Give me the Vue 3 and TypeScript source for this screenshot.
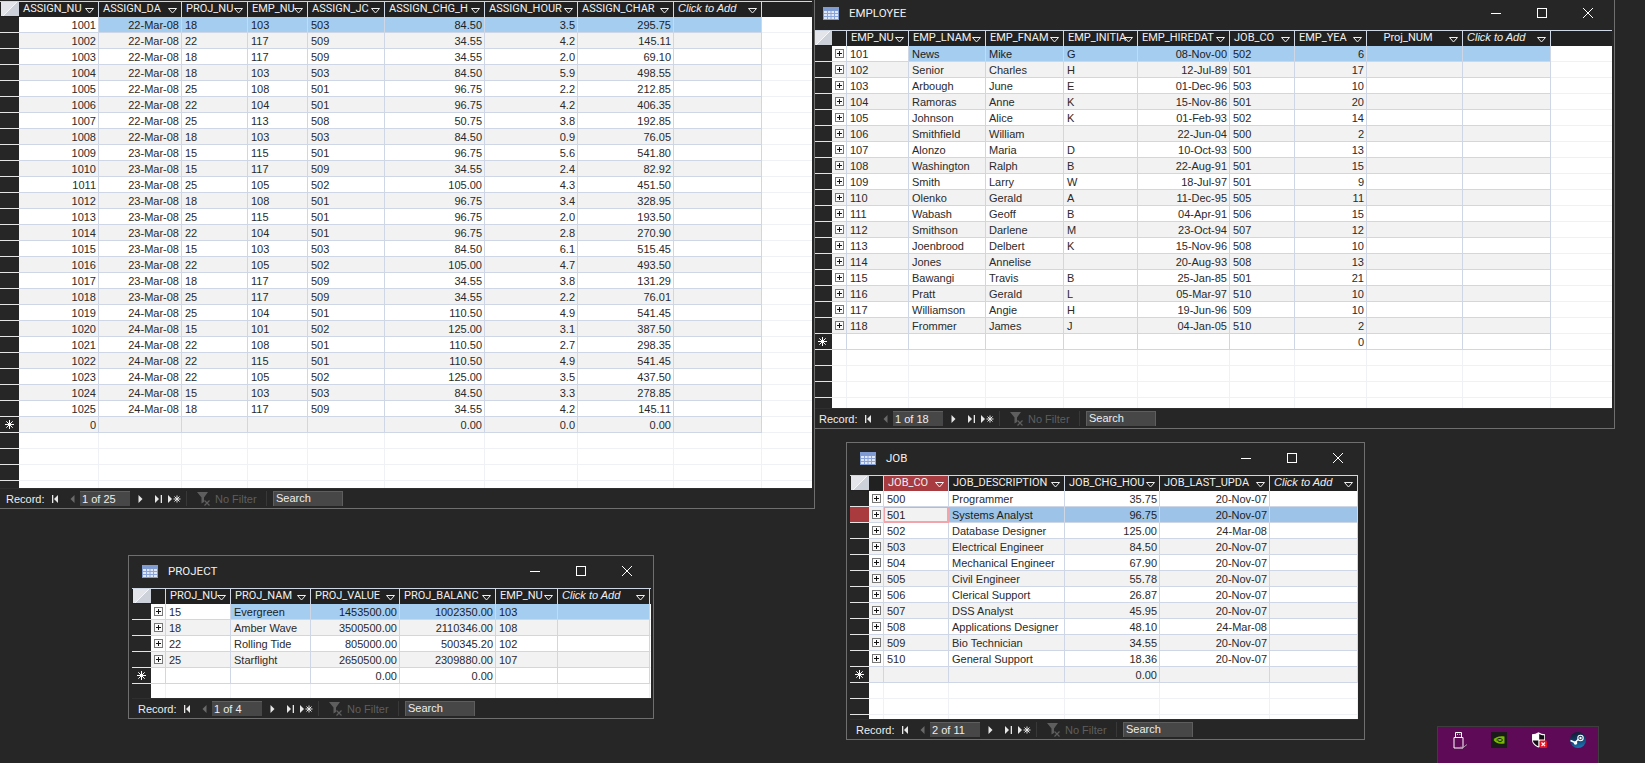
<script setup lang="ts">
interface Column {
    name: string,
    width: number,
    right?: boolean,
    centered?: boolean,
    italic?: boolean
}

interface SheetWindow {
    key: string,
    title: string,
    left: number,
    top: number,
    width: number,
    height: number,
    expand: boolean,
    columns: Column[],
    rows: string[],
    newRow: string,
    selected: number,
    active: boolean,
    record: string
}

const addCol = (width: number): Column => ({name: 'Click to Add', width, italic: true});

const windows: SheetWindow[] = [
    {
        key: 'employee',
        title: 'EMPLOYEE',
        left: 809,
        top: -3,
        width: 806,
        height: 432,
        expand: true,
        columns: [
            {name: 'EMP_NU', width: 62},
            {name: 'EMP_LNAM', width: 77},
            {name: 'EMP_FNAM', width: 78},
            {name: 'EMP_INITIA', width: 74},
            {name: 'EMP_HIREDAT', width: 92, right: true},
            {name: 'JOB_CO', width: 65},
            {name: 'EMP_YEA', width: 72, right: true},
            {name: 'Proj_NUM', width: 96, centered: true},
            addCol(88)
        ],
        rows: [
            '101|News|Mike|G|08-Nov-00|502|6',
            '102|Senior|Charles|H|12-Jul-89|501|17',
            '103|Arbough|June|E|01-Dec-96|503|10',
            '104|Ramoras|Anne|K|15-Nov-86|501|20',
            '105|Johnson|Alice|K|01-Feb-93|502|14',
            '106|Smithfield|William||22-Jun-04|500|2',
            '107|Alonzo|Maria|D|10-Oct-93|500|13',
            '108|Washington|Ralph|B|22-Aug-91|501|15',
            '109|Smith|Larry|W|18-Jul-97|501|9',
            '110|Olenko|Gerald|A|11-Dec-95|505|11',
            '111|Wabash|Geoff|B|04-Apr-91|506|15',
            '112|Smithson|Darlene|M|23-Oct-94|507|12',
            '113|Joenbrood|Delbert|K|15-Nov-96|508|10',
            '114|Jones|Annelise||20-Aug-93|508|13',
            '115|Bawangi|Travis|B|25-Jan-85|501|21',
            '116|Pratt|Gerald|L|05-Mar-97|510|10',
            '117|Williamson|Angie|H|19-Jun-96|509|10',
            '118|Frommer|James|J|04-Jan-05|510|2'
        ],
        newRow: '||||||0',
        selected: 0,
        active: false,
        record: '1 of 18'
    },
    {
        key: 'assignment',
        title: '',
        left: -4,
        top: -32,
        width: 819,
        height: 541,
        expand: false,
        columns: [
            {name: 'ASSIGN_NU', width: 80, right: true},
            {name: 'ASSIGN_DA', width: 83, right: true},
            {name: 'PROJ_NU', width: 66},
            {name: 'EMP_NU', width: 60},
            {name: 'ASSIGN_JC', width: 77},
            {name: 'ASSIGN_CHG_H', width: 100, right: true},
            {name: 'ASSIGN_HOUR', width: 93, right: true},
            {name: 'ASSIGN_CHAR', width: 96, right: true},
            addCol(88)
        ],
        rows: [
            '1001|22-Mar-08|18|103|503|84.50|3.5|295.75',
            '1002|22-Mar-08|22|117|509|34.55|4.2|145.11',
            '1003|22-Mar-08|18|117|509|34.55|2.0|69.10',
            '1004|22-Mar-08|18|103|503|84.50|5.9|498.55',
            '1005|22-Mar-08|25|108|501|96.75|2.2|212.85',
            '1006|22-Mar-08|22|104|501|96.75|4.2|406.35',
            '1007|22-Mar-08|25|113|508|50.75|3.8|192.85',
            '1008|22-Mar-08|18|103|503|84.50|0.9|76.05',
            '1009|23-Mar-08|15|115|501|96.75|5.6|541.80',
            '1010|23-Mar-08|15|117|509|34.55|2.4|82.92',
            '1011|23-Mar-08|25|105|502|105.00|4.3|451.50',
            '1012|23-Mar-08|18|108|501|96.75|3.4|328.95',
            '1013|23-Mar-08|25|115|501|96.75|2.0|193.50',
            '1014|23-Mar-08|22|104|501|96.75|2.8|270.90',
            '1015|23-Mar-08|15|103|503|84.50|6.1|515.45',
            '1016|23-Mar-08|22|105|502|105.00|4.7|493.50',
            '1017|23-Mar-08|18|117|509|34.55|3.8|131.29',
            '1018|23-Mar-08|25|117|509|34.55|2.2|76.01',
            '1019|24-Mar-08|25|104|501|110.50|4.9|541.45',
            '1020|24-Mar-08|15|101|502|125.00|3.1|387.50',
            '1021|24-Mar-08|22|108|501|110.50|2.7|298.35',
            '1022|24-Mar-08|22|115|501|110.50|4.9|541.45',
            '1023|24-Mar-08|22|105|502|125.00|3.5|437.50',
            '1024|24-Mar-08|15|103|503|84.50|3.3|278.85',
            '1025|24-Mar-08|18|117|509|34.55|4.2|145.11'
        ],
        newRow: '0|||||0.00|0.0|0.00',
        selected: 0,
        active: false,
        record: '1 of 25'
    },
    {
        key: 'project',
        title: 'PROJECT',
        left: 128,
        top: 555,
        width: 526,
        height: 164,
        expand: true,
        columns: [
            {name: 'PROJ_NU', width: 65},
            {name: 'PROJ_NAM', width: 80},
            {name: 'PROJ_VALUE', width: 89, right: true},
            {name: 'PROJ_BALANC', width: 96, right: true},
            {name: 'EMP_NU', width: 62},
            addCol(92)
        ],
        rows: [
            '15|Evergreen|1453500.00|1002350.00|103',
            '18|Amber Wave|3500500.00|2110346.00|108',
            '22|Rolling Tide|805000.00|500345.20|102',
            '25|Starflight|2650500.00|2309880.00|107'
        ],
        newRow: '||0.00|0.00|',
        selected: 0,
        active: false,
        record: '1 of 4'
    },
    {
        key: 'job',
        title: 'JOB',
        left: 846,
        top: 442,
        width: 519,
        height: 298,
        expand: true,
        columns: [
            {name: 'JOB_CO', width: 65},
            {name: 'JOB_DESCRIPTION', width: 116},
            {name: 'JOB_CHG_HOU', width: 95, right: true},
            {name: 'JOB_LAST_UPDA', width: 110, right: true},
            addCol(88)
        ],
        rows: [
            '500|Programmer|35.75|20-Nov-07',
            '501|Systems Analyst|96.75|20-Nov-07',
            '502|Database Designer|125.00|24-Mar-08',
            '503|Electrical Engineer|84.50|20-Nov-07',
            '504|Mechanical Engineer|67.90|20-Nov-07',
            '505|Civil Engineer|55.78|20-Nov-07',
            '506|Clerical Support|26.87|20-Nov-07',
            '507|DSS Analyst|45.95|20-Nov-07',
            '508|Applications Designer|48.10|24-Mar-08',
            '509|Bio Technician|34.55|20-Nov-07',
            '510|General Support|18.36|20-Nov-07'
        ],
        newRow: '||0.00|',
        selected: 1,
        active: true,
        record: '2 of 11'
    }
];

const emptyRows = [0, 1, 2, 3, 4, 5];

function winStyle(win: SheetWindow) {
    return {
        left: `${win.left}px`,
        top: `${win.top}px`,
        width: `${win.width}px`,
        height: `${win.height}px`
    };
}

function gridStyle(win: SheetWindow) {
    const widths = win.columns.map(c => `${c.width}px`).join(' ');
    return {gridTemplateColumns: `19px ${win.expand ? '15px ' : ''}${widths} 1fr`};
}

function cells(win: SheetWindow, line: string) {
    const parts = line.split('|');
    return win.columns.map((_, i) => parts[i] ?? '');
}
</script>

<template>
    <div class="desktop">
        <section
            v-for="win in windows"
            :key="win.key"
            class="win"
            :class="`win--${win.key}`"
            :style="winStyle(win)"
        >
            <header class="titlebar">
                <template v-if="win.title">
                    <svg class="table-icon" width="16" height="13" viewBox="0 0 16 13">
                        <rect width="16" height="13" fill="#7f9bd2"/>
                        <rect x="1" y="4" width="14" height="8" fill="#dfe7f8"/>
                        <path d="M1 6.500h14M1 9.500h14" stroke="#8aa3d8"/>
                        <path d="M4.500 4v8M8 4v8M11.500 4v8" stroke="#8aa3d8"/>
                    </svg>
                    <span class="title">{{ win.title }}</span>
                    <div class="controls">
                        <svg class="control" width="46" height="12" viewBox="0 0 46 12">
                            <path d="M18 6.500h10" stroke="#ffffff"/>
                        </svg>
                        <svg class="control" width="46" height="12" viewBox="0 0 46 12">
                            <rect x="18.500" y="1.500" width="9" height="9" fill="none" stroke="#ffffff"/>
                        </svg>
                        <svg class="control" width="46" height="12" viewBox="0 0 46 12">
                            <path d="M18 1l10 10M28 1l-10 10" stroke="#ffffff"/>
                        </svg>
                    </div>
                </template>
            </header>

            <div class="sheet">
                <div class="row row--head" :style="gridStyle(win)">
                    <div class="corner"></div>
                    <div v-if="win.expand" class="hcell"></div>
                    <div
                        v-for="(col, i) in win.columns"
                        :key="col.name"
                        class="hcell"
                        :class="{'hcell--active': win.active && i === 0}"
                    >
                        <span
                            class="hlabel"
                            :class="{'hlabel--italic': col.italic, 'hlabel--centered': col.centered}"
                        >{{ col.name }}</span>
                        <svg class="harrow" width="9" height="6" viewBox="0 0 9 6">
                            <path d="M0.500 0.500h8L4.500 5z" fill="none" stroke="#f0f0f0"/>
                        </svg>
                    </div>
                    <div></div>
                </div>

                <div
                    v-for="(line, r) in win.rows"
                    :key="line"
                    class="row"
                    :class="{'row--alt': r % 2 === 1}"
                    :style="gridStyle(win)"
                >
                    <div class="selector" :class="{'selector--active': win.active && r === win.selected}"></div>
                    <div v-if="win.expand" class="cell cell--expand">
                        <svg width="9" height="9" viewBox="0 0 9 9">
                            <rect x="0.500" y="0.500" width="8" height="8" fill="#fbfbfb" stroke="#777777"/>
                            <path d="M2 4.500h5M4.500 2v5" stroke="#111111"/>
                        </svg>
                    </div>
                    <div
                        v-for="(value, c) in cells(win, line)"
                        :key="c"
                        class="cell"
                        :class="{
                            'cell--right': win.columns[c].right,
                            'cell--selected': r === win.selected && c > 0,
                            'cell--focus': win.active && r === win.selected && c === 0
                        }"
                    >{{ value }}</div>
                    <div class="filler"></div>
                </div>

                <div class="row" :class="{'row--alt': win.rows.length % 2 === 1}" :style="gridStyle(win)">
                    <div class="selector">
                        <svg width="9" height="9" viewBox="0 0 9 9">
                            <path d="M4.500 0v9M0 4.500h9M1.300 1.300l6.400 6.400M7.700 1.300l-6.400 6.400" stroke="#ffffff"/>
                        </svg>
                    </div>
                    <div v-if="win.expand" class="cell"></div>
                    <div
                        v-for="(value, c) in cells(win, win.newRow)"
                        :key="c"
                        class="cell"
                        :class="{'cell--right': win.columns[c].right}"
                    >{{ value }}</div>
                    <div class="filler"></div>
                </div>

                <div v-for="n in emptyRows" :key="n" class="row row--empty" :style="gridStyle(win)">
                    <div class="selector"></div>
                    <div v-if="win.expand" class="cell"></div>
                    <div v-for="col in win.columns" :key="col.name" class="cell"></div>
                    <div class="filler"></div>
                </div>
            </div>

            <footer class="nav">
                <span class="nav-label">Record:</span>
                <svg class="nav-first" width="6" height="8" viewBox="0 0 6 8">
                    <path d="M0 0h1.300v8H0zM6 0v8L2 4z" fill="#e8e8e8"/>
                </svg>
                <svg class="nav-prev" width="5" height="8" viewBox="0 0 5 8">
                    <path d="M4.500 0v8L0.500 4z" fill="#6a6a6a"/>
                </svg>
                <span class="nav-box">{{ win.record }}</span>
                <svg class="nav-next" width="5" height="8" viewBox="0 0 5 8">
                    <path d="M0.500 0v8l4-4z" fill="#e8e8e8"/>
                </svg>
                <svg class="nav-last" width="7" height="8" viewBox="0 0 7 8">
                    <path d="M0 0v8l4-4zM5.700 0H7v8H5.700z" fill="#e8e8e8"/>
                </svg>
                <svg class="nav-new" width="13" height="8" viewBox="0 0 13 8">
                    <path d="M0 0v8l4-4z" fill="#e8e8e8"/>
                    <path d="M9 0.500v7M5.500 4h7M6.500 1.500l5 5M11.500 1.500l-5 5" stroke="#e8e8e8"/>
                </svg>
                <span class="nav-sep nav-sep--first"></span>
                <svg class="nav-filter" width="14" height="14" viewBox="0 0 14 14">
                    <path d="M0 0h11L7 5.500V10L4.500 11.500V5.500z" fill="#5e5e5e"/>
                    <path d="M7.500 8.500l5 5M12.500 8.500l-5 5" stroke="#5e5e5e" stroke-width="1.200"/>
                </svg>
                <span class="nav-nofilter">No Filter</span>
                <span class="nav-sep nav-sep--second"></span>
                <span class="nav-search">Search</span>
            </footer>
        </section>

        <div class="tray">
            <div class="tray-slot">
                <svg width="16" height="17" viewBox="0 0 16 17">
                    <path d="M3.500 0.500h6v5h-6zM2 5.500h9v10.500H2z" fill="none" stroke="#ffffff"/>
                    <path d="M5 2.300h1M7.300 2.300h1" stroke="#ffffff"/>
                    <path d="M9 14.500l1.500 1.500 4.500-3.500" fill="none" stroke="#a99aa7"/>
                </svg>
            </div>
            <div class="tray-slot">
                <svg width="16" height="16" viewBox="0 0 16 16">
                    <rect width="16" height="16" fill="#1b1b1b"/>
                    <path d="M2.500 8C4.500 5 8 3.800 13.500 4.500v7C8 12.500 4.500 11 2.500 8z" fill="#76b900"/>
                    <path d="M5.500 8C7 6.500 9 6 10.500 6.800c1.200.7 1 2.300-.5 2.700C8.500 10 7 9.200 6.500 8" fill="none" stroke="#1b1b1b"/>
                </svg>
            </div>
            <div class="tray-slot">
                <svg width="16" height="16" viewBox="0 0 16 16">
                    <path d="M7.500 0.300C9.500 1.600 11.500 2.200 14 2.200V8c0 3.500-3 6.200-6.500 7.500C4 14.200 1 11.500 1 8V2.200c2.500 0 4.500-.6 6.500-1.900z" fill="#ffffff"/>
                    <path d="M8.200 2c1.500.8 3 1.200 5 1.300v4.200h-5zM1.800 8.500h5.500v5.800C4.500 13 2.200 11 1.800 8.500z" fill="#140f14"/>
                    <rect x="8.500" y="8.500" width="7.500" height="7.500" rx="1" fill="#e81123"/>
                    <path d="M10.500 10.500l3.500 3.500M14 10.500l-3.500 3.500" stroke="#ffffff" stroke-width="1.200"/>
                </svg>
            </div>
            <div class="tray-slot">
                <svg width="16" height="16" viewBox="0 0 16 16">
                    <defs>
                        <linearGradient id="steam-fill" x1="0.300" y1="0" x2="0.600" y2="1">
                            <stop offset="0" stop-color="#101c30"/>
                            <stop offset="0.500" stop-color="#123a6a"/>
                            <stop offset="1" stop-color="#1a7ab8"/>
                        </linearGradient>
                    </defs>
                    <circle cx="8" cy="8" r="8" fill="url(#steam-fill)"/>
                    <circle cx="10.500" cy="6" r="2.700" fill="none" stroke="#ffffff" stroke-width="1.100"/>
                    <circle cx="10.500" cy="6" r="1.200" fill="#ffffff"/>
                    <path d="M8 7.500L5.500 10.200M0.500 8.500L5 10.500" stroke="#ffffff" stroke-width="1.400"/>
                    <circle cx="5.500" cy="11" r="1.800" fill="#ffffff"/>
                </svg>
            </div>
        </div>
    </div>
</template>

<style scoped>
.desktop {
    position: relative;
    width: 1645px;
    height: 763px;
    overflow: hidden;
    background: #262626;
    font-family: "Liberation Sans", Arial, sans-serif;
    font-size: 11px;
    color: #2a2a2a;
}

.win {
    position: absolute;
    box-sizing: border-box;
    display: flex;
    flex-direction: column;
    background: #262626;
    border: 1px solid #6f6f6f;
    padding: 0 2px 0 3px;
}

.win--job {
    padding-right: 6px;
}

.titlebar {
    flex: none;
    height: 30px;
    margin-bottom: 2px;
    display: flex;
    align-items: center;
    color: #f0f0f0;
}

.table-icon {
    margin-left: 10px;
}

.title {
    margin-left: 10px;
    font-family: Roboto, "Liberation Sans", sans-serif;
    font-size: 11.5px;
}

.controls {
    margin-left: auto;
    margin-right: 1px;
    display: flex;
}

.win--job .controls {
    margin-right: -3px;
}

.control {
    display: block;
}

.sheet {
    flex: 1;
    min-height: 0;
    overflow: hidden;
    background: #ffffff;
}

.row {
    display: grid;
    height: 16px;
    box-sizing: border-box;
    background: #ffffff;
}

.row--alt .cell {
    background: #f2f2f2;
}

.row--head {
    background: #212121;
    border-top: 1px solid #cfd6e4;
}

.corner {
    margin: 0 0 1px 1px;
    background: linear-gradient(135deg, #e3e5ea 49%, #f6f7f9 50%, #f6f7f9 52%, #cdd1da 53%);
}

.hcell {
    min-width: 0;
    display: flex;
    align-items: center;
    gap: 4px;
    padding: 0 4px;
    border-right: 1px solid #cfd6e4;
    color: #f0f0f0;
    font-family: Roboto, "Liberation Sans", sans-serif;
    font-size: 11px;
    line-height: 13px;
}

.hcell--active {
    background: #a83b40;
}

.hlabel {
    flex: 1;
    min-width: 0;
    margin-bottom: 2px;
    white-space: nowrap;
}

.hlabel--italic {
    font-family: "Liberation Sans", Arial, sans-serif;
    font-style: italic;
}

.hlabel--centered {
    text-align: center;
}

.harrow {
    flex: none;
    margin-top: 3px;
}

.selector {
    background: #262626;
    border-bottom: 1px solid #e4e4e4;
    display: flex;
    align-items: center;
    justify-content: center;
}

.selector--active {
    background: #a93b3e;
}

.cell {
    min-width: 0;
    overflow: hidden;
    box-sizing: border-box;
    padding: 1px 2px 0 3px;
    border-right: 1px solid #cfd6e6;
    border-bottom: 1px solid #cfd6e6;
    line-height: 14px;
    white-space: nowrap;
}

.cell--right {
    text-align: right;
}

.cell--expand {
    padding: 0;
    display: flex;
    align-items: center;
    justify-content: center;
}

.cell--selected,
.row--alt .cell--selected {
    background: #a4cdf0;
    color: #1c1c1c;
}

.win--job .cell--selected,
.win--job .row--alt .cell--selected {
    background: #9dc4e8;
}

.cell--focus {
    box-shadow: inset 0 0 0 1px #f3a3aa;
    border-color: #f3a3aa;
    color: #1c1c1c;
}

.filler {
    border-bottom: 1px solid #f0f1f5;
}

.row--empty .cell {
    background: #ffffff;
    border-color: #f0f1f5;
}

.nav {
    flex: none;
    height: 20px;
    display: flex;
    align-items: center;
    color: #eeeeee;
    border-top: 1px solid #2f2f2f;
    box-sizing: border-box;
}

.nav-label {
    margin-left: 6px;
    width: 39px;
}

.nav-first { margin-left: 7px; }
.nav-prev { margin-left: 12px; }
.nav-next { margin-left: 8px; }
.nav-last { margin-left: 12px; }
.nav-new { margin-left: 6px; }
.nav-filter { margin-left: 10px; }

.nav-box {
    margin-left: 5px;
    width: 50px;
    height: 15px;
    box-sizing: border-box;
    padding-left: 2px;
    line-height: 14px;
    background: #474747;
    border-top: 1px solid #5e5e5e;
}

.nav-sep {
    width: 1px;
    height: 15px;
    background: #383838;
}

.nav-sep--first { margin-left: 5px; }
.nav-sep--second { margin-left: 8px; }

.nav-nofilter {
    margin-left: 4px;
    width: 43px;
    color: #5e5e5e;
    white-space: nowrap;
}

.nav-search {
    margin-left: 6px;
    width: 70px;
    height: 15px;
    box-sizing: border-box;
    padding-left: 2px;
    line-height: 13px;
    background: #474747;
    border: 1px solid #5e5e5e;
    border-bottom: none;
}

.tray {
    position: absolute;
    left: 1437px;
    top: 726px;
    width: 162px;
    height: 37px;
    box-sizing: border-box;
    padding: 5px 0 0 2px;
    display: flex;
    align-items: flex-start;
    background: #5e0a57;
    border: 1px solid #3d3d3d;
    border-bottom: none;
}

.tray-slot {
    width: 40px;
    display: flex;
    justify-content: center;
}
</style>

<style>
html,
body {
    background: #262626;
    overflow: hidden;
}
</style>
